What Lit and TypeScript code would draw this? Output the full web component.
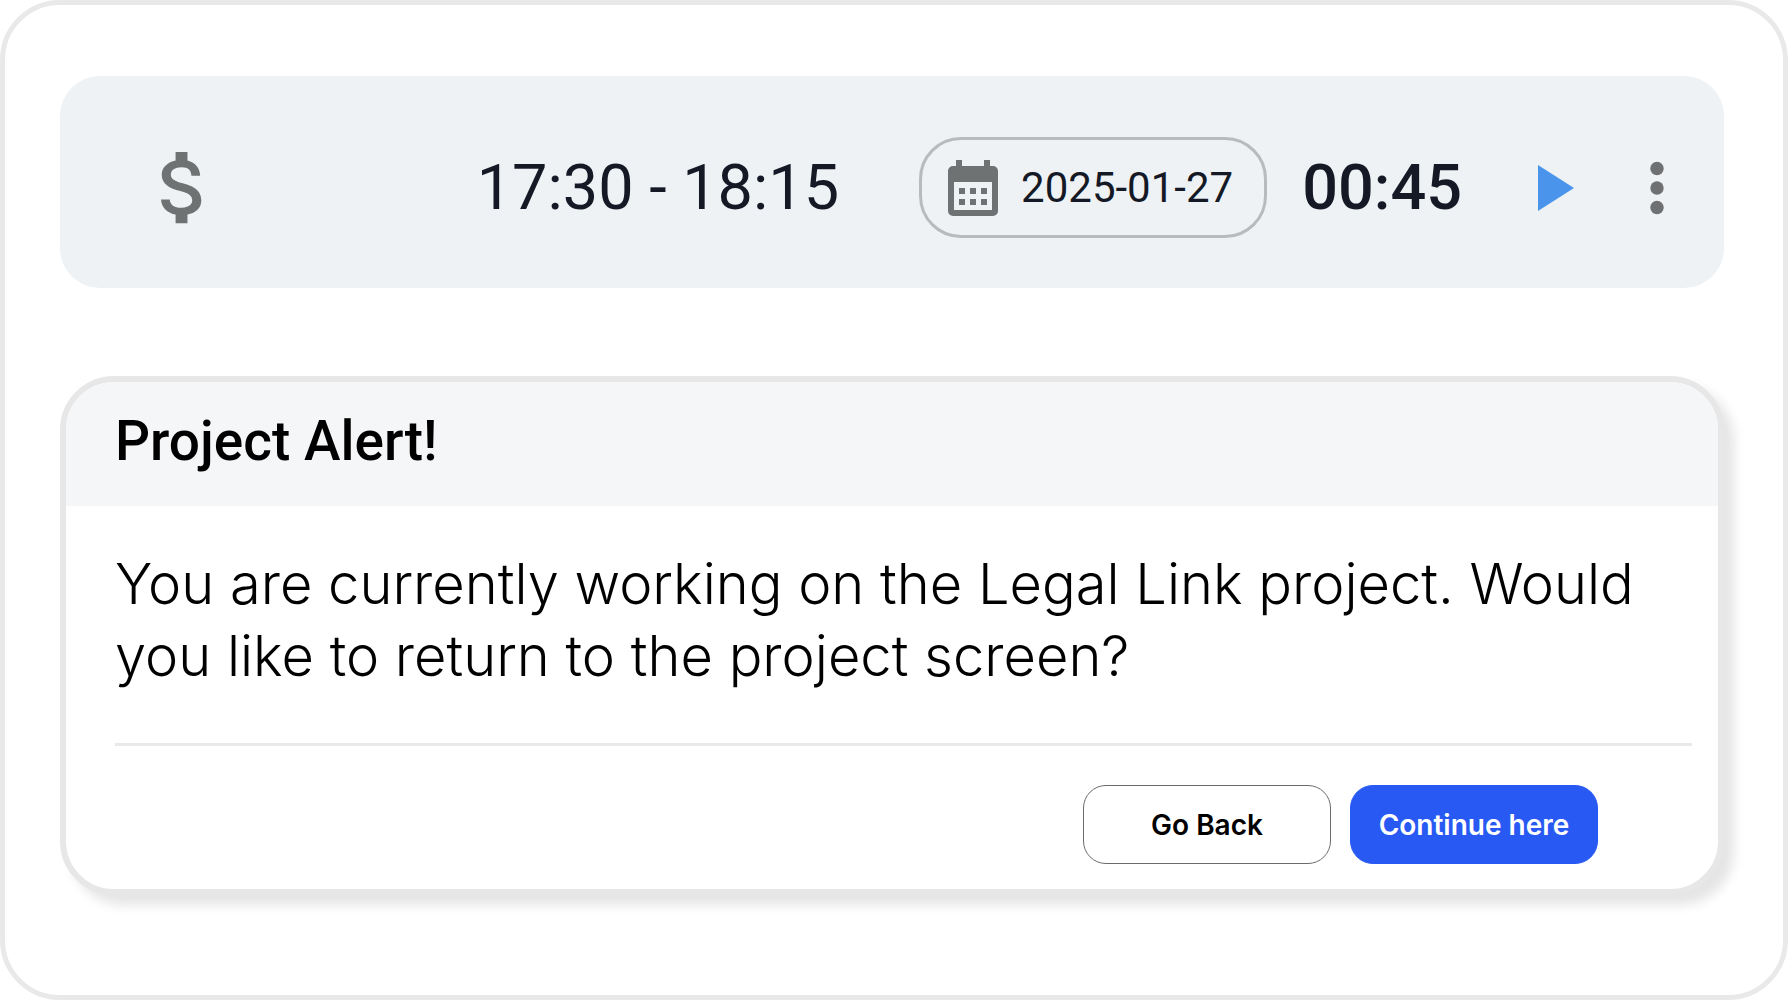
import { LitElement, html, css } from "lit";
import { customElement, property } from "lit/decorators.js";

@customElement("time-entry-bar")
class TimeEntryBar extends LitElement {
  @property() range = "";
  @property() date = "";
  @property() duration = "";

  static styles = css`
    :host {
      display: block;
    }
    .bar {
      display: flex;
      align-items: center;
      box-sizing: border-box;
      padding: 61px 59px 50px 76px;
      border-radius: 40px;
      background: #eef2f5;
      color: #151926;
      font-family: Roboto, "Liberation Sans", sans-serif;
      white-space: nowrap;
    }
    button {
      display: flex;
      align-items: center;
      margin: 0;
      padding: 0;
      border: 0;
      background: none;
      color: inherit;
      font: inherit;
      cursor: pointer;
    }
    svg {
      display: block;
    }
    .billable {
      margin-right: auto;
      color: #6f7273;
    }
    .range {
      font-size: 63px;
      line-height: 76px;
    }
    .date {
      box-sizing: border-box;
      height: 101px;
      margin-left: 80px;
      padding: 0 31px 0 26px;
      gap: 23px;
      border: 3px solid #b9babb;
      border-radius: 42px;
      font-size: 42px;
      line-height: 50px;
    }
    .date svg {
      color: #6f7273;
    }
    .duration {
      margin-left: 35px;
      font-size: 63px;
      line-height: 76px;
      font-weight: 500;
    }
    .play {
      margin-left: 76px;
      color: #4a94ec;
    }
    .more {
      margin-left: 75px;
      color: #6f7071;
    }
  `;

  render() {
    return html`
      <div class="bar">
        <button class="billable" aria-label="Billable">
          <svg width="95" height="95" viewBox="0 0 24 24" fill="currentColor">
            <path
              d="M11.8 10.9c-2.27-.59-3-1.2-3-2.15 0-1.09 1.01-1.85 2.7-1.85 1.78 0 2.44.85 2.5 2.1h2.21c-.07-1.72-1.12-3.3-3.21-3.81V3h-3v2.16c-1.94.42-3.5 1.68-3.5 3.61 0 2.31 1.91 3.46 4.7 4.13 2.5.6 3 1.48 3 2.41 0 .69-.49 1.79-2.7 1.79-2.06 0-2.87-.92-2.98-2.1h-2.2c.12 2.19 1.76 3.42 3.68 3.83V21h3v-2.15c1.95-.37 3.5-1.5 3.5-3.55 0-2.84-2.43-3.81-4.7-4.4z"
            />
          </svg>
        </button>
        <span class="range">${this.range}</span>
        <button class="date">
          <svg width="50" height="56" viewBox="0 0 50 56" fill="currentColor">
            <path
              fill-rule="evenodd"
              d="M8 0h6v6h22V0h6v6h3a5 5 0 0 1 5 5v40a5 5 0 0 1-5 5H5a5 5 0 0 1-5-5V11a5 5 0 0 1 5-5h3zM6 22v28h38V22z"
            />
            <path
              d="M11 28h6v6h-6zM22 28h6v6h-6zM33 28h6v6h-6zM11 39h6v6h-6zM22 39h6v6h-6zM33 39h6v6h-6z"
            />
          </svg>
          <span>${this.date}</span>
        </button>
        <span class="duration">${this.duration}</span>
        <button class="play" aria-label="Start timer">
          <svg width="36" height="46" viewBox="0 0 36 46" fill="currentColor">
            <path d="M0 0l36 23L0 46z" />
          </svg>
        </button>
        <button class="more" aria-label="More options">
          <svg width="16" height="54" viewBox="0 0 16 54" fill="currentColor">
            <circle cx="8" cy="7.5" r="6.7" />
            <circle cx="8" cy="27" r="6.7" />
            <circle cx="8" cy="46.5" r="6.7" />
          </svg>
        </button>
      </div>
    `;
  }
}

@customElement("project-alert")
class ProjectAlert extends LitElement {
  @property() heading = "";
  @property() message = "";

  static styles = css`
    :host {
      display: block;
    }
    .card {
      border: 6px solid #e7e7e7;
      border-radius: 54px;
      background: #fff;
      box-shadow: 10px 10px 12px #e5e5e5;
      color: #000;
      font-family: Inter, "Liberation Sans", sans-serif;
    }
    .head {
      padding: 27px 49px 33px;
      border-radius: 48px 48px 0 0;
      background: #f5f6f8;
    }
    .title {
      margin: 0;
      font: 500 55px/64px Roboto, "Liberation Sans", sans-serif;
    }
    .body {
      padding: 42px 26px 25px 49px;
    }
    .message {
      margin: 0;
      padding-bottom: 51px;
      border-bottom: 3px solid #e9e9e9;
      font-size: 56px;
      line-height: 72px;
      font-weight: 300;
    }
    .actions {
      display: flex;
      justify-content: flex-end;
      gap: 19px;
      padding: 39px 94px 0 0;
    }
    .action {
      box-sizing: border-box;
      width: 248px;
      height: 79px;
      padding: 0;
      border: 1px solid #6b6b6b;
      border-radius: 23px;
      background: #fff;
      color: #000;
      font-family: inherit;
      font-size: 28px;
      font-weight: 600;
      white-space: nowrap;
      cursor: pointer;
    }
    .primary {
      border-color: #2859f3;
      background: #2859f3;
      color: #fff;
    }
  `;

  render() {
    return html`
      <section class="card" role="alertdialog" aria-labelledby="title" aria-describedby="message">
        <header class="head"><h1 class="title" id="title">${this.heading}</h1></header>
        <div class="body">
          <p class="message" id="message">${this.message}</p>
          <div class="actions">
            <button class="action">Go Back</button>
            <button class="action primary">Continue here</button>
          </div>
        </div>
      </section>
    `;
  }
}

@customElement("app-root")
class AppRoot extends LitElement {
  static styles = css`
    :host {
      display: block;
    }
    .frame {
      display: flex;
      flex-direction: column;
      gap: 88px;
      box-sizing: border-box;
      min-height: 100vh;
      padding: 71px 59px 71px 55px;
      border: 5px solid #e9e9e9;
      border-radius: 60px;
      background: #fff;
    }
  `;

  render() {
    return html`
      <main class="frame">
        <time-entry-bar range="17:30 - 18:15" date="2025-01-27" duration="00:45"></time-entry-bar>
        <project-alert
          heading="Project Alert!"
          message="You are currently working on the Legal Link project. Would you like to return to the project screen?"
        ></project-alert>
      </main>
    `;
  }
}
